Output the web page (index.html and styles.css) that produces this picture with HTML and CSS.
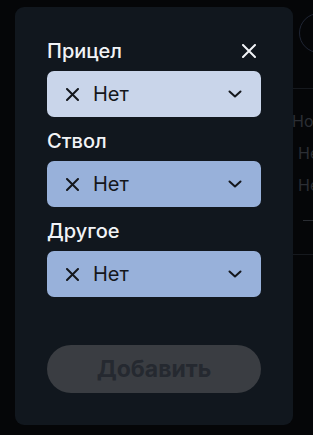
FILE: index.html
```html
<!DOCTYPE html>
<html lang="ru">
<head>
<meta charset="utf-8">
<title>Модуль</title>
<link rel="stylesheet" href="styles.css">
</head>
<body>
<div class="page">
  <div class="page-head"><span class="avatar"></span></div>
  <div class="page-list">
    <div class="page-row first">Ноль</div>
    <div class="page-row">Нет</div>
    <div class="page-row">Нет</div>
    <div class="page-dash"></div>
  </div>
</div>

<div class="overlay">
  <div class="dialog">
    <div class="field">
      <div class="label-row">
        <span class="label">Прицел</span>
        <span class="close">
          <svg width="14" height="14" viewBox="0 0 14 14"><path d="M1 1L13 13M13 1L1 13" stroke="#f2f4f7" stroke-width="2" stroke-linecap="round"/></svg>
        </span>
      </div>
      <div class="select light">
        <svg class="x" width="13" height="13" viewBox="0 0 13 13"><path d="M1 1L12 12M12 1L1 12" stroke="#14171c" stroke-width="2" stroke-linecap="round"/></svg>
        <span class="value">Нет</span>
        <svg class="chev" width="14" height="8" viewBox="0 0 14 8"><path d="M1.5 1.5L7 6.5L12.5 1.5" fill="none" stroke="#14171c" stroke-width="2" stroke-linecap="round" stroke-linejoin="round"/></svg>
      </div>
    </div>
    <div class="field">
      <div class="label-row"><span class="label">Ствол</span></div>
      <div class="select">
        <svg class="x" width="13" height="13" viewBox="0 0 13 13"><path d="M1 1L12 12M12 1L1 12" stroke="#14171c" stroke-width="2" stroke-linecap="round"/></svg>
        <span class="value">Нет</span>
        <svg class="chev" width="14" height="8" viewBox="0 0 14 8"><path d="M1.5 1.5L7 6.5L12.5 1.5" fill="none" stroke="#14171c" stroke-width="2" stroke-linecap="round" stroke-linejoin="round"/></svg>
      </div>
    </div>
    <div class="field">
      <div class="label-row"><span class="label">Другое</span></div>
      <div class="select">
        <svg class="x" width="13" height="13" viewBox="0 0 13 13"><path d="M1 1L12 12M12 1L1 12" stroke="#14171c" stroke-width="2" stroke-linecap="round"/></svg>
        <span class="value">Нет</span>
        <svg class="chev" width="14" height="8" viewBox="0 0 14 8"><path d="M1.5 1.5L7 6.5L12.5 1.5" fill="none" stroke="#14171c" stroke-width="2" stroke-linecap="round" stroke-linejoin="round"/></svg>
      </div>
    </div>
    <button class="add" disabled>Добавить</button>
  </div>
</div>
</body>
</html>
```

FILE: styles.css
```css
* { box-sizing: border-box; }
html, body { margin: 0; height: 100%; }
body {
  background: #050608;
  font-family: Inter, "Noto Sans", sans-serif;
  overflow: hidden;
}
.page {
  margin-left: 290px;
  color: #2b2e34;
}
.page-head {
  height: 89px;
  border-bottom: 1px solid #16191e;
  padding: 13px 0 0 9px;
}
.avatar {
  display: block;
  width: 40px;
  height: 40px;
  border: 1.5px solid #1f2534;
  border-radius: 50%;
}
.page-list {
  padding-top: 22px;
  border-bottom: 1px solid #16191e;
  height: 166px;
}
.page-row {
  font-size: 16px;
  line-height: 20px;
  height: 32px;
  padding-left: 8px;
  white-space: nowrap;
}
.page-row.first { padding-left: 2px; }
.page-dash {
  margin: 13px 0 0 13px;
  height: 1px;
  background: #2a2d33;
}
.overlay {
  position: fixed;
  inset: 0;
  padding: 7px 20px 10px 15px;
  display: flex;
  align-items: flex-start;
}
.dialog {
  width: 278px;
  height: 418px;
  background: #11171e;
  border-radius: 9px;
  padding: 32px 32px 32px 32px;
  display: flex;
  flex-direction: column;
  gap: 12px;
}
.field { display: flex; flex-direction: column; gap: 8px; }
.label-row {
  display: flex;
  align-items: center;
  justify-content: space-between;
  height: 24px;
}
.label {
  color: #f1f3f6;
  font-size: 20px;
  font-weight: 500;
  line-height: 24px;
}
.close {
  width: 24px;
  height: 24px;
  display: flex;
  align-items: center;
  justify-content: center;
}
.select {
  height: 46px;
  border-radius: 7px;
  background: #98b1da;
  display: flex;
  align-items: center;
  padding: 0 19px 0 19px;
  color: #14171c;
}
.select.light { background: #c9d5ea; }
.x { flex: none; }
.value {
  margin-left: 14px;
  font-size: 20px;
  line-height: 24px;
  flex: 1;
}
.chev { flex: none; }
.add {
  margin-top: 36px;
  height: 48px;
  border: none;
  border-radius: 24px;
  background: #3a3d42;
  color: #252930;
  font-family: Inter, "Noto Sans", sans-serif;
  font-size: 23px;
  font-weight: 700;
}
```
